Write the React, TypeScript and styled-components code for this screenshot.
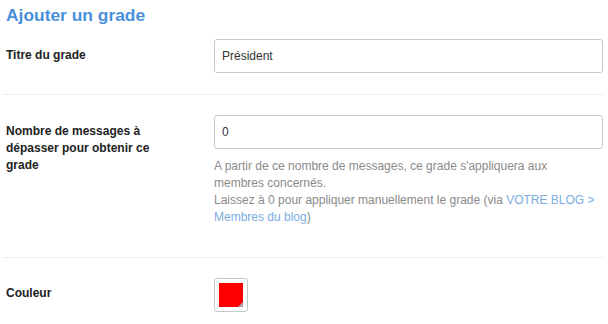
import styled, { createGlobalStyle } from "styled-components";

const GlobalStyle = createGlobalStyle`
  html, body {
    margin: 0;
    padding: 0;
    background: #fff;
    font-family: "Liberation Sans", Arial, Helvetica, sans-serif;
  }
`;

const Page = styled.div`
  width: 600px;
  margin-left: 4px;
`;

const Title = styled.h2`
  box-sizing: border-box;
  margin: 0;
  padding: 4px 2px 0;
  height: 30px;
  font-size: 17.4px;
  font-weight: 700;
  line-height: 22px;
  color: #4a90d9;
`;

const Row = styled.div<{ $first?: boolean; $last?: boolean; $bottom: number }>`
  display: grid;
  grid-template-columns: 210px 389px;
  padding: ${(p) => (p.$first ? "9px" : "20px")} 0 ${(p) => p.$bottom}px;
  border-bottom: ${(p) => (p.$last ? "none" : "1px dotted #dcdcdc")};
`;

const Label = styled.label<{ $pad?: number }>`
  padding: ${(p) => p.$pad ?? 8}px 0 0 2px;
  max-width: 168px;
  font-size: 12px;
  font-weight: 700;
  line-height: 17px;
  color: #222;
`;

const Field = styled.div`
  display: flex;
  flex-direction: column;
`;

const Input = styled.input`
  box-sizing: border-box;
  width: 100%;
  height: 34px;
  padding: 0 7px;
  border: 1px solid #c8c8c8;
  border-radius: 3px;
  font-family: inherit;
  font-size: 12px;
  color: #333;
  outline: none;
`;

const Help = styled.p`
  max-width: 382px;
  margin: 9px 0 0;
  font-size: 12px;
  line-height: 17px;
  color: #8a8a8a;
  a {
    color: #7cace0;
    text-decoration: none;
  }
`;

const Swatch = styled.div`
  box-sizing: border-box;
  width: 34px;
  height: 34px;
  padding: 4px;
  border: 1px solid #c8c8c8;
  border-radius: 3px;
  background: #fff;
`;

const SwatchColor = styled.div<{ $color: string }>`
  position: relative;
  width: 24px;
  height: 24px;
  background: ${(p) => p.$color};
  &::after {
    content: "";
    position: absolute;
    right: 0;
    bottom: 0;
    border-style: solid;
    border-width: 0 0 5px 5px;
    border-color: transparent transparent #a8a8a8 transparent;
  }
`;

export default function App() {
  return (
    <>
      <GlobalStyle />
      <Page>
        <Title>Ajouter un grade</Title>
        <Row $first $bottom={21}>
          <Label>Titre du grade</Label>
          <Field>
            <Input defaultValue="Président" />
          </Field>
        </Row>
        <Row $bottom={31}>
          <Label>Nombre de messages à dépasser pour obtenir ce grade</Label>
          <Field>
            <Input defaultValue="0" />
            <Help>
              A partir de ce nombre de messages, ce grade s'appliquera aux
              membres concernés.
              <br />
              Laissez à 0 pour appliquer manuellement le grade (via{" "}
              <a href="#">VOTRE BLOG &gt; Membres du blog</a>)
            </Help>
          </Field>
        </Row>
        <Row $last $bottom={10}>
          <Label $pad={7}>Couleur</Label>
          <Field>
            <Swatch>
              <SwatchColor $color="#ff0000" />
            </Swatch>
          </Field>
        </Row>
      </Page>
    </>
  );
}
